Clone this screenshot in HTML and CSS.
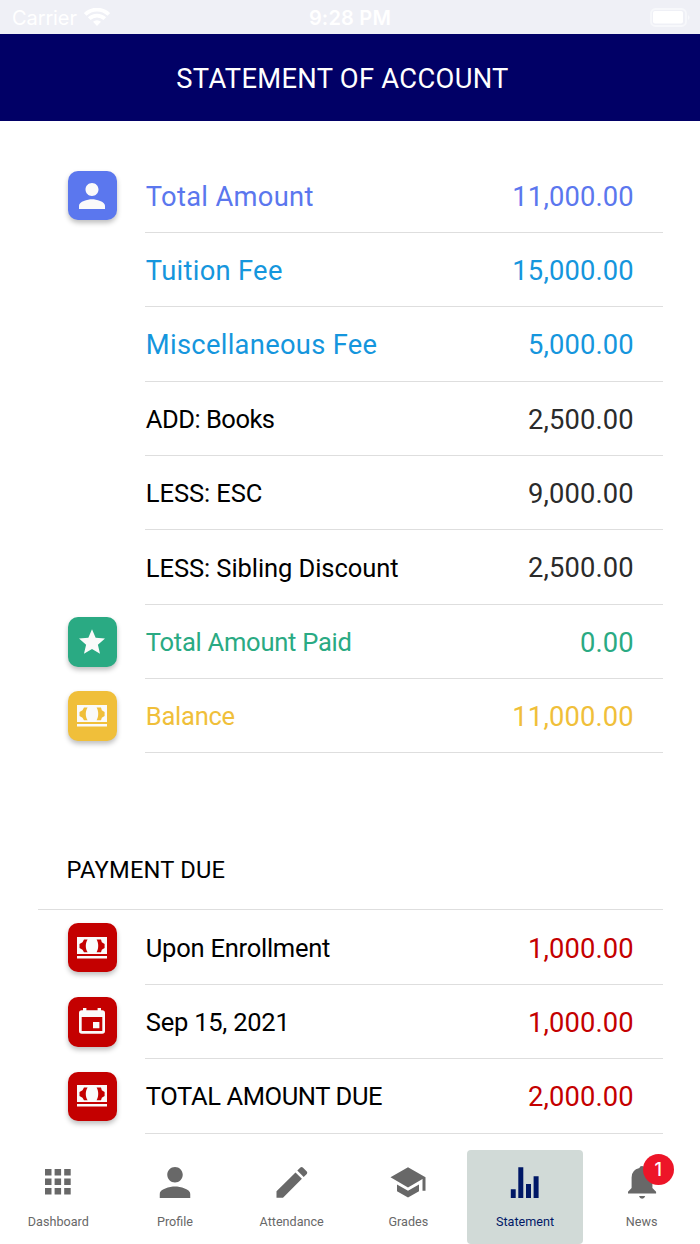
FILE: index.html
```html
<!DOCTYPE html>
<html lang="en">
<head>
<meta charset="utf-8">
<title>Statement of Account</title>
<link rel="stylesheet" href="styles.css">
</head>
<body>
<svg class="defs" aria-hidden="true">
  <symbol id="person" viewBox="4 4 16 16"><path d="M12 12c2.21 0 4-1.79 4-4s-1.79-4-4-4-4 1.79-4 4 1.79 4 4 4zm0 2c-2.67 0-8 1.34-8 4v2h16v-2c0-2.66-5.33-4-8-4z"/></symbol>
  <symbol id="cash" viewBox="0 0 30 22"><path fill-rule="evenodd" d="M0 0h30v17H0zM7 2.4L5.5 5.2 2.5 7v4l3 1.8L7 15.2h3.6C8.2 11.5 8.2 6 10.6 2.4zM19.6 2.4C21.8 6 21.8 11.5 19.6 15.2H24l.8-2.4 2.8-1.8V7l-2.8-1.8-.8-2.8zM0 19h30v2.6H0z"/></symbol>
</svg>
<div class="status">
  <span class="carrier">Carrier</span>
  <svg class="wifi" viewBox="0 0 26 19"><path d="M13 18l4-4.2a5.8 5.8 0 0 0-8 0z"/><path class="arc" d="M5.2 10.7a11.2 11.2 0 0 1 15.6 0M1.2 6.4a17 17 0 0 1 23.6 0"/></svg>
  <span class="clock">9:28 PM</span>
  <svg class="battery" viewBox="0 0 42 20"><rect class="case" x="1" y="1" width="35" height="17" rx="4.5"/><rect x="3" y="3" width="30" height="12.5" rx="2"/><path class="tip" d="M38 7q3 2.5 0 5z"/></svg>
</div>
<header class="title">STATEMENT OF ACCOUNT</header>
<main class="content">
  <section class="list">
    <div class="row indigo large"><span class="tile"><svg class="person"><use href="#person"/></svg></span><div class="line"><span class="label">Total Amount</span><span class="amount">11,000.00</span></div></div>
    <div class="row blue large"><div class="line"><span class="label">Tuition Fee</span><span class="amount">15,000.00</span></div></div>
    <div class="row blue large"><div class="line"><span class="label">Miscellaneous Fee</span><span class="amount">5,000.00</span></div></div>
    <div class="row plain"><div class="line"><span class="label tight">ADD: Books</span><span class="amount">2,500.00</span></div></div>
    <div class="row plain"><div class="line"><span class="label">LESS: ESC</span><span class="amount">9,000.00</span></div></div>
    <div class="row plain"><div class="line"><span class="label">LESS: Sibling Discount</span><span class="amount">2,500.00</span></div></div>
    <div class="row green"><span class="tile"><svg class="star" viewBox="2 2 20 19"><path d="M12 17.27L18.18 21l-1.64-7.03L22 9.24l-7.19-.61L12 2 9.19 8.63 2 9.24l5.46 4.73L5.82 21z"/></svg></span><div class="line"><span class="label">Total Amount Paid</span><span class="amount">0.00</span></div></div>
    <div class="row gold"><span class="tile"><svg class="cash"><use href="#cash"/></svg></span><div class="line"><span class="label">Balance</span><span class="amount">11,000.00</span></div></div>
  </section>
  <h2 class="section-title">PAYMENT DUE</h2>
  <section class="list">
    <div class="row due"><span class="tile"><svg class="cash"><use href="#cash"/></svg></span><div class="line"><span class="label">Upon Enrollment</span><span class="amount">1,000.00</span></div></div>
    <div class="row due"><span class="tile"><svg class="calendar" viewBox="0 0 26 26"><path fill-rule="evenodd" d="M4 0h3.4v2.2h11.2V0H22v2.2h1.2A2.8 2.8 0 0 1 26 5v18a2.8 2.8 0 0 1-2.8 2.8H2.8A2.8 2.8 0 0 1 0 23V5a2.8 2.8 0 0 1 2.8-2.8H4zM2.7 9v14.1h20.6V9zM14 14h6.4v6.2H14z"/></svg></span><div class="line"><span class="label">Sep 15, 2021</span><span class="amount">1,000.00</span></div></div>
    <div class="row due"><span class="tile"><svg class="cash"><use href="#cash"/></svg></span><div class="line"><span class="label caps">TOTAL AMOUNT DUE</span><span class="amount">2,000.00</span></div></div>
  </section>
</main>
<nav class="tabs">
  <a class="tab"><svg viewBox="0 0 40 40"><path d="M7 8h6.5v6.5H7zm9.6 0h6.5v6.5h-6.5zm9.6 0h6.5v6.5h-6.5zM7 17.5h6.5V24H7zm9.6 0h6.5V24h-6.5zm9.6 0h6.5V24h-6.5zM7 27h6.5v6.5H7zm9.6 0h6.5v6.5h-6.5zm9.6 0h6.5v6.5h-6.5z"/></svg><span>Dashboard</span></a>
  <a class="tab"><svg viewBox="0 0 40 40"><use href="#person" x="4.5" y="6" width="31" height="31"/></svg><span>Profile</span></a>
  <a class="tab"><svg viewBox="0 0 40 40"><path d="M4.5 30.2L23.5 11.4l6.4 6.4L11 36.8H4.5zM25.3 9.6l3.1-3.1q1.2-1 2.4 0l4 4q1 1.2 0 2.4L31.7 16z"/></svg><span>Attendance</span></a>
  <a class="tab"><svg viewBox="0 0 40 40"><path d="M2.5 16.2L20 6.2l17.5 10v13.5h-3V18L20 26.4zM9 23.4l11 6.4 11-6.4v6.8l-11 6.4-11-6.4z"/></svg><span>Grades</span></a>
  <a class="tab active"><svg viewBox="0 0 40 40"><path d="M5.8 28.3h4.9V37H5.8zM13.3 6.2h5V37h-5zM21 23h5v14h-5zM28.6 15.3h5V37h-5z"/></svg><span>Statement</span></a>
  <a class="tab"><svg viewBox="0 0 40 40"><path d="M17 35h6.2q-.8 2.8-3.1 2.8T17 35zM9.6 16.5q0-7.5 7.8-9.4Q17.7 5 20 5t2.6 2.1q7.8 1.9 7.8 9.4V27l3.7 3.8v1.7H6v-1.7L9.6 27z"/></svg><span>News</span><b class="badge">1</b></a>
</nav>
</body>
</html>
```
FILE: styles.css
```css
* { box-sizing: border-box; }
body {
  margin: 0;
  height: 1244px;
  display: flex;
  flex-direction: column;
  overflow: hidden;
  background: #fff;
  font-family: Roboto, sans-serif;
}
svg { display: block; fill: currentColor; }
.defs { display: none; }

.status {
  height: 34px;
  flex: none;
  display: grid;
  grid-template-columns: auto 26px 1fr auto;
  align-items: center;
  padding: 2px 8px 0 12px;
  background: #eff0f6;
  color: #fff;
  font-family: Inter, sans-serif;
  font-size: 20px;
}
.carrier { width: 72px; letter-spacing: -0.1px; }
.wifi { width: 26px; height: 19px; margin-top: -2px; }
.arc { fill: none; stroke: #fff; stroke-width: 3.8; }
.clock {
  justify-self: center;
  font-weight: 600;
  letter-spacing: 0.2px;
  padding-right: 60px;
}
.battery { width: 42px; height: 20px; margin-top: -1px; }
.case { fill: none; stroke: #f7f8fb; stroke-width: 1.8; }
.tip { fill: #f7f8fb; }

.title {
  height: 87.4px;
  flex: none;
  display: flex;
  align-items: center;
  justify-content: center;
  padding: 3px 15px 0 0;
  background: #010066;
  color: #fff;
  font-size: 27.34px;
  letter-spacing: 0.3px;
}

.content { flex: 1; padding: 37.1px 37.5px 0 38px; }
.row {
  height: 74.37px;
  display: flex;
  align-items: center;
  justify-content: flex-end;
  padding-left: 29.5px;
}
.tile {
  width: 49.5px;
  height: 49.5px;
  margin-right: auto;
  display: grid;
  place-items: center;
  border-radius: 10px;
  box-shadow: 0 3px 5px rgba(0, 0, 0, 0.25);
}
.tile svg { color: #fafafa; }
.person { width: 26px; height: 26px; }
.star { width: 26px; height: 25px; }
.cash { width: 30px; height: 22px; margin-right: 1px; }
.calendar { width: 26px; height: 26px; margin-bottom: 1px; }
.line {
  width: 517.5px;
  height: 100%;
  display: flex;
  align-items: center;
  justify-content: space-between;
  padding: 2px 28.7px 0 0.8px;
  border-bottom: 1px solid #dedede;
}
.label { font-size: 25.52px; letter-spacing: -0.25px; padding-bottom: 0.8px; }
.amount { font-size: 27.34px; letter-spacing: 0.15px; padding-top: 1px; }
.large .label { font-size: 27.34px; letter-spacing: 0.3px; padding: 1px 0 0; }

.indigo { color: #5b77ee; }
.indigo .tile { background: #5b77ee; }
.blue { color: #1596dd; }
.plain .label, .due .label { color: #000; }
.plain .label { letter-spacing: -0.08px; }
.plain .label.tight { letter-spacing: -0.5px; }
.plain .amount { color: #2b2b2b; }
.green { color: #2aaa83; }
.green .tile { background: #2aaa83; }
.gold { color: #f0bf3a; }
.gold .tile { background: #f0bf3a; }
.due { color: #c40000; }
.due .tile { background: #c40000; }
.due .label.caps { letter-spacing: -0.4px; }

.section-title {
  height: 157.1px;
  margin: 0;
  padding: 101.4px 0 0 28.5px;
  border-bottom: 1px solid #dedede;
  font-size: 23.7px;
  line-height: 30px;
  letter-spacing: 0.2px;
  font-weight: 400;
}

.tabs {
  height: 94px;
  flex: none;
  display: grid;
  grid-template-columns: repeat(6, 1fr);
}
.tab {
  position: relative;
  display: flex;
  flex-direction: column;
  align-items: center;
  padding: 11px 0 0;
  color: #686868;
  font-size: 12.6px;
  line-height: 16px;
}
.tab svg { width: 40px; height: 40px; margin-bottom: 13px; }
.tab.active {
  background: #d1dad7;
  color: #001866;
  border-radius: 4px;
}
.badge {
  position: absolute;
  left: 59.5px;
  top: 4px;
  width: 31px;
  height: 31px;
  border-radius: 50%;
  background: #ed1528;
  color: #fff;
  font: 500 18px/31px Inter, sans-serif;
  text-align: center;
}
```
